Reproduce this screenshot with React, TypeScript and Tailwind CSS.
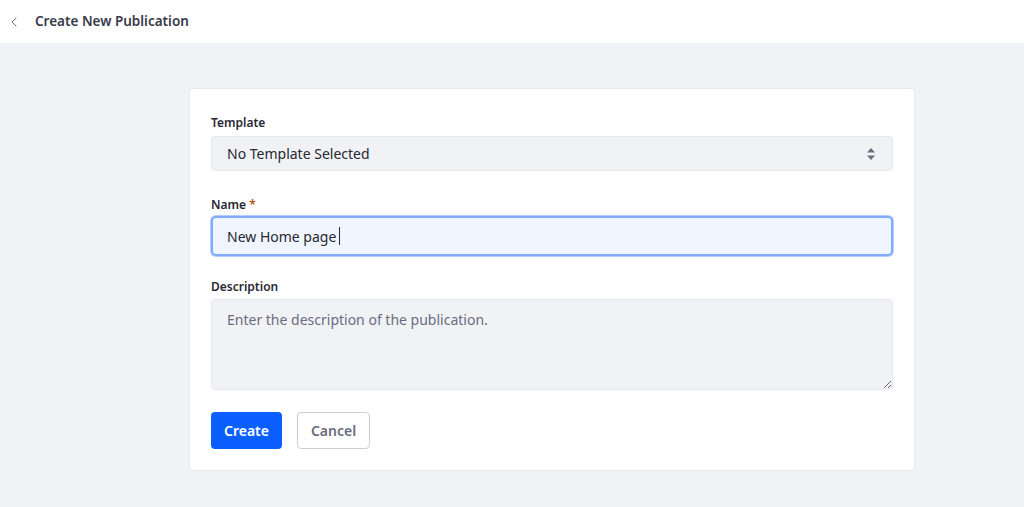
import { ChevronLeft } from "lucide-react";

const App = () => {
  return (
    <div className="min-h-[507px] bg-[#f1f2f5] font-['Noto_Sans',sans-serif] text-[#272833]">
      <div className="flex h-[43px] items-center bg-white pl-[6px]">
        <ChevronLeft className="h-[16px] w-[16px] text-[#6b6c7e]" strokeWidth={1.5} />
        <h1 className="ml-[13px] text-[13.5px] font-semibold text-[#393a4a]">Create New Publication</h1>
      </div>
      <div className="pl-[189px] pt-[45px]">
        <div className="w-[726px] rounded-[4px] border border-[#e7e7ed] bg-white px-[21px] pt-[25px] pb-[21px]">
          <label className="mb-[4px] block text-[12px] font-semibold">Template</label>
          <div className="flex h-[35px] items-center justify-between rounded-[4px] border border-[#e7e7ed] bg-[#f1f2f5] px-[15px] text-[14px] text-[#272833]">
            <span>No Template Selected</span>
            <svg width="10" height="14" viewBox="0 0 10 14" className="mr-[1px] text-[#6b6c7e]">
              <path d="M5 1 L9 5.5 H1 Z M5 13 L9 8.5 H1 Z" fill="currentColor" />
            </svg>
          </div>
          <label className="mt-[25px] mb-[2px] block text-[12px] font-semibold">
            Name <span className="text-[#b95000]">*</span>
          </label>
          <div className="flex h-[40px] items-center rounded-[5px] border-2 border-[#80acff] bg-[#f0f5ff] px-[14px] text-[14px] shadow-[0_0_0_1px_#b3cdff]">
            <span>New Home page</span>
            <span className="ml-[3px] h-[18px] w-px bg-[#272833]" />
          </div>
          <label className="mt-[22px] mb-[3px] block text-[12px] font-semibold">Description</label>
          <textarea
            className="block h-[91px] w-full rounded-[4px] border border-[#e7e7ed] bg-[#f1f2f5] px-[15px] py-[9px] text-[14px] outline-none placeholder:text-[#6b6c7e]"
            placeholder="Enter the description of the publication."
          />
          <div className="mt-[22px] flex gap-[15px]">
            <button className="h-[37px] w-[71px] rounded-[4px] bg-[#0b5fff] text-[14px] font-semibold text-white">Create</button>
            <button className="h-[37px] w-[73px] rounded-[4px] border border-[#cdced9] bg-white text-[14px] font-semibold text-[#6b6c7e]">Cancel</button>
          </div>
        </div>
      </div>
    </div>
  );
};

export default App;
